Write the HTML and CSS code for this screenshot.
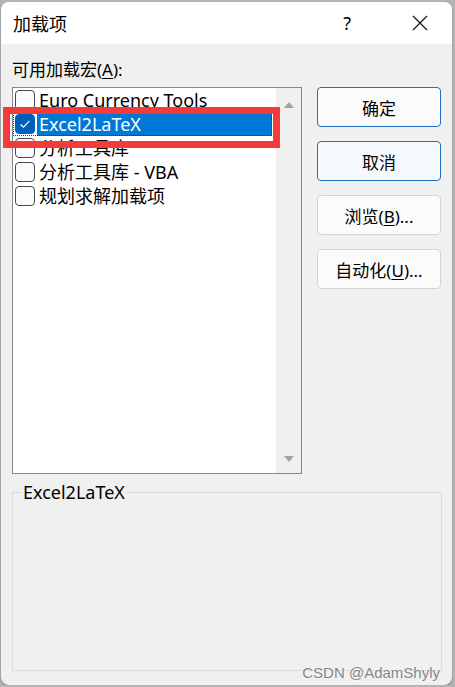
FILE: index.html
```html
<!DOCTYPE html>
<html>
<head>
    <title>加载项</title>
    <meta charset="utf-8">
    <link rel="stylesheet" href="styles.css">
</head>
<body>
<div class="window">
    <div class="title-bar">
        <span class="title">加载项</span>
        <span class="help">?</span>
        <svg class="close" width="16" height="16" viewBox="0 0 16 16">
            <path d="M1 1 L15 15 M15 1 L1 15" stroke="#1a1a1a" stroke-width="1.3" fill="none"/>
        </svg>
    </div>

    <div class="content">
        <div class="list-label">可用加载宏(<u>A</u>):</div>

        <div class="main-row">
            <div class="listbox">
                <ul class="items">
                    <li class="item"><span class="check"></span><span class="name">Euro Currency Tools</span></li>
                    <li class="item selected"><span class="check checked">
                        <svg width="12" height="10" viewBox="0 0 12 10"><path d="M1.5 5.5 L4.5 8.2 L10.5 1.8" stroke="#fff" stroke-width="1.1" fill="none"/></svg>
                    </span><span class="name">Excel2LaTeX</span></li>
                    <li class="item"><span class="check"></span><span class="name">分析工具库</span></li>
                    <li class="item"><span class="check"></span><span class="name">分析工具库 - VBA</span></li>
                    <li class="item"><span class="check"></span><span class="name">规划求解加载项</span></li>
                </ul>
                <div class="scrollbar">
                    <span class="arrow up"></span>
                    <span class="arrow down"></span>
                </div>
            </div>

            <div class="buttons">
                <button type="button" class="btn btn-default">确定</button>
                <button type="button" class="btn btn-default btn-focus">取消</button>
                <button type="button" class="btn">浏览(<u>B</u>)...</button>
                <button type="button" class="btn">自动化(<u>U</u>)...</button>
            </div>
        </div>

        <fieldset class="description">
            <legend>Excel2LaTeX</legend>
        </fieldset>
    </div>

    <!-- annotation drawn over the screenshot -->
    <div class="highlight-box"></div>
    <div class="watermark">CSDN @AdamShyly</div>
</div>
</body>
</html>
```

FILE: styles.css
```css
body {
    margin: 0;
    background-color: #b4b4b4;
    font-family: "Noto Sans", "Noto Sans CJK SC", sans-serif;
    font-size: 17px;
    color: #000;
}

.window {
    position: relative;
    width: 451px;
    height: 683px;
    margin: 2px 0 0 1px;
    background-color: #f0f0f0;
    border-radius: 8px;
    overflow: hidden;
    box-shadow: 0 1px 2px rgba(0,0,0,0.35);
}

.title-bar {
    display: flex;
    align-items: center;
    height: 42px;
    padding: 0 24px 0 12px;
    background-color: #fff;
}

.title {
    flex: 1;
    font-size: 18px;
}

.help {
    font-size: 18px;
    margin-right: 61px;
}

.content {
    padding: 14px 11px 0 11px;
}

.list-label {
    height: 24px;
    line-height: 24px;
    margin-bottom: 5px;
}

.list-label u,
.btn u {
    text-underline-offset: 2px;
}

.main-row {
    display: flex;
    align-items: flex-start;
}

.listbox {
    display: flex;
    width: 289px;
    height: 385px;
    border: 1px solid #828790;
    background-color: #fff;
    font-size: 18px;
}

.items {
    flex: 1;
    list-style: none;
    margin: 0;
    padding: 0;
}

.item {
    display: flex;
    align-items: center;
    height: 24px;
    padding-left: 2px;
}

.check {
    display: flex;
    align-items: center;
    justify-content: center;
    box-sizing: border-box;
    width: 20px;
    height: 20px;
    border: 1px solid #4a4a4a;
    border-radius: 4px;
    background-color: #fbfbfb;
    margin-right: 4px;
}

.check.checked {
    background-color: #005fb8;
    border-color: #005fb8;
}

.name {
    line-height: 24px;
    white-space: nowrap;
}

.item.selected {
    outline: 1px dotted #333;
    outline-offset: -1px;
    margin-right: 4px;
}

.item.selected .name {
    flex: 1;
    padding-left: 2px;
    margin-left: -2px;
    background-color: #0078d7;
    color: #fff;
    height: 23px;
    line-height: 23px;
}

.scrollbar {
    display: flex;
    flex-direction: column;
    justify-content: space-between;
    align-items: center;
    width: 25px;
    background-color: #f0f0f0;
    padding: 14px 0 11px;
}

.arrow {
    width: 0;
    height: 0;
    border-left: 5px solid transparent;
    border-right: 5px solid transparent;
}

.arrow.up {
    border-bottom: 6px solid #a3a3a3;
}

.arrow.down {
    border-top: 6px solid #a3a3a3;
}

.buttons {
    display: flex;
    flex-direction: column;
    gap: 14px;
    margin-left: 15px;
}

.btn {
    width: 124px;
    height: 40px;
    font-family: "Noto Sans", "Noto Sans CJK SC", sans-serif;
    font-size: 17px;
    color: #000;
    background-color: #fbfbfb;
    border: 1px solid #d3d3d3;
    border-radius: 4px;
    padding: 0;
}

.btn-default {
    border-color: #1f6fc5;
}

.btn-focus {
    background-color: #f5f9fd;
}

.description {
    box-sizing: border-box;
    width: 430px;
    height: 189px;
    margin: 8px 0 0 0;
    padding: 0;
    border: 1px solid #dcdcdc;
    border-top-color: #d9d9d9;
}

.description legend {
    margin-left: 8px;
    padding: 0 2px;
    font-size: 18px;
    line-height: 20px;
}

.highlight-box {
    position: absolute;
    left: 2px;
    top: 105px;
    width: 263px;
    height: 27px;
    border: 7px solid #f33b3b;
}

.watermark {
    position: absolute;
    right: 12px;
    bottom: 4px;
    font-family: "Liberation Sans", Arial, sans-serif;
    font-size: 15px;
    color: #858585;
    text-shadow: 0 0 2px #fff;
}
```
